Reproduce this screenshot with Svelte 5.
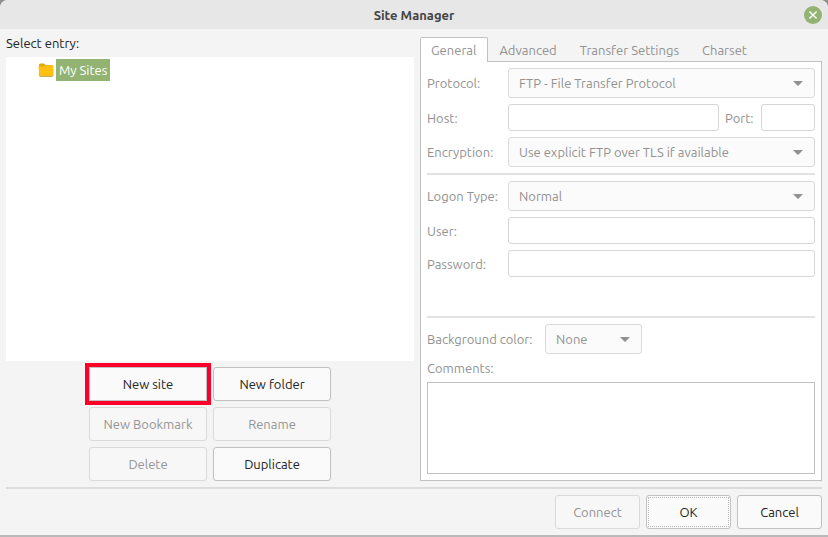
<script>
  const tabs = ["General", "Advanced", "Transfer Settings", "Charset"];
  const actions = [
    { label: "New site", enabled: true, marked: true },
    { label: "New folder", enabled: true },
    { label: "New Bookmark", enabled: false },
    { label: "Rename", enabled: false },
    { label: "Delete", enabled: false },
    { label: "Duplicate", enabled: true }
  ];

  let activeTab = $state("General");
</script>

{#snippet dropdown(id, option)}
  <div class="dropdown">
    <select {id} disabled>
      <option>{option}</option>
    </select>
    <svg width="10" height="5" viewBox="0 0 10 5" aria-hidden="true">
      <path d="M0 0h10L5.6 4.6q-.6.5-1.2 0z" fill="#919191" />
    </svg>
  </div>
{/snippet}

<div class="window">
  <header>
    <h1>Site Manager</h1>
    <button class="close" aria-label="Close">
      <svg width="18" height="18" viewBox="0 0 18 18">
        <circle cx="9" cy="9" r="9" fill="#92b372" />
        <path d="M5.4 5.4l7.2 7.2M12.6 5.4l-7.2 7.2" stroke="#fff" stroke-width="1.4" />
      </svg>
    </button>
  </header>

  <main>
    <section class="sites">
      <h2 id="entries">Select entry:</h2>
      <ul class="tree" aria-labelledby="entries">
        <li>
          <svg width="16" height="14" viewBox="0 0 16 14" aria-hidden="true">
            <path d="M1 2q0-1.500 1.500-1.500h3.500l1.500 1.500h6q1.500 0 1.500 1.500v9H1z" fill="#e8a60c" />
            <path d="M.5 4q0-.5.5-.5h5l1.500-1h7q1 0 1 1v8.500q0 1.500-1.500 1.500h-11q-1.500 0-1.500-1.500z" fill="#ffc011" />
            <path d="M1 12.500q.3.900 1.500.9h11q1.200 0 1.500-.9" fill="none" stroke="#c5a55b" />
          </svg>
          <span>My Sites</span>
        </li>
      </ul>
      <div class="actions">
        {#each actions as action}
          <button class="button" class:marked={action.marked} disabled={!action.enabled}>
            {action.label}
          </button>
        {/each}
      </div>
    </section>

    <section class="settings">
      <div class="tabs" role="tablist">
        {#each tabs as tab}
          <button
            role="tab"
            class="tab"
            class:active={tab === activeTab}
            aria-selected={tab === activeTab}
            onclick={() => (activeTab = tab)}>{tab}</button>
        {/each}
      </div>

      <div class="panel" role="tabpanel">
        <div class="fields">
          <label for="protocol">Protocol:</label>
          {@render dropdown("protocol", "FTP - File Transfer Protocol")}

          <label for="host">Host:</label>
          <div class="host">
            <input id="host" type="text" disabled />
            <label for="port">Port:</label>
            <input id="port" class="port" type="text" disabled />
          </div>

          <label for="encryption">Encryption:</label>
          {@render dropdown("encryption", "Use explicit FTP over TLS if available")}
        </div>
        <hr />
        <div class="fields logon">
          <label for="logon">Logon Type:</label>
          {@render dropdown("logon", "Normal")}

          <label for="user">User:</label>
          <input id="user" type="text" disabled />

          <label for="password">Password:</label>
          <input id="password" type="password" disabled />
        </div>
        <hr />
        <div class="color">
          <label for="color">Background color:</label>
          {@render dropdown("color", "None")}
        </div>
        <label class="comments-label" for="comments">Comments:</label>
        <textarea id="comments" disabled></textarea>
      </div>
    </section>
  </main>

  <footer>
    <button class="button" disabled>Connect</button>
    <button class="button default">OK</button>
    <button class="button">Cancel</button>
  </footer>
</div>

<style>
  :global(body) {
    background: #8f8f8f;
  }
  .window,
  .window * {
    box-sizing: border-box;
  }
  .window {
    min-height: 100vh;
    display: flex;
    flex-direction: column;
    background: #f4f4f4;
    border-bottom: 2px solid #b9b9b9;
    border-radius: 8px 8px 0 0;
    color: #222;
    font: 13px/18px Ubuntu, "Noto Sans", sans-serif;
  }
  button,
  input,
  select,
  textarea {
    margin: 0;
    font: inherit;
    color: inherit;
  }

  header {
    height: 29px;
    display: grid;
    grid-template-columns: 1fr auto 1fr;
    align-items: center;
    padding: 0 6px;
    background: #e7e7e7;
    border-radius: 8px 8px 0 0;
  }
  h1 {
    grid-column: 2;
    margin: 0;
    font-size: 13px;
    line-height: 18px;
    font-weight: 600;
    color: #444;
  }
  .close {
    justify-self: end;
    padding: 0;
    border: 0;
    background: none;
  }
  .close svg {
    display: block;
  }

  main {
    flex: 1;
    display: grid;
    grid-template-columns: 68fr 67fr;
    gap: 6px;
    padding: 6px;
  }
  .sites,
  .settings {
    display: flex;
    flex-direction: column;
    min-width: 0;
  }
  .settings {
    padding-top: 2px;
    color: #929292;
  }
  h2 {
    margin: 0 0 6px;
    font-size: 13px;
    line-height: 16px;
    font-weight: 400;
  }
  .tree {
    flex: 1;
    margin: 0;
    padding: 2px 32px;
    background: #fff;
    list-style: none;
  }
  .tree li {
    display: flex;
    align-items: center;
    gap: 2px;
  }
  .tree span {
    padding: 2px 3px;
    background: #92b372;
    color: #fff;
  }
  .actions {
    display: grid;
    grid-template-columns: 118px 118px;
    justify-content: center;
    gap: 6px;
    padding-top: 6px;
  }

  .button {
    height: 34px;
    padding: 0;
    border: 1px solid #c1c1c1;
    border-radius: 3px;
    background: #fafafa;
  }
  .button:disabled {
    border-color: #dadada;
    background: #f7f7f7;
    color: #959595;
  }
  .button.marked {
    outline: 4px solid #fb0029;
    outline-offset: 0;
    border-radius: 0;
  }

  .tabs {
    display: flex;
    margin-bottom: -1px;
  }
  .tab {
    height: 25px;
    padding: 0 11px 0 10px;
    border: 1px solid transparent;
    border-bottom: 0;
    background: none;
  }
  .tab.active {
    border-color: #c1c1c1;
    border-radius: 2px 2px 0 0;
    background: #fff;
    /* keeps the tab over the panel's top edge */
    z-index: 1;
  }
  .panel {
    flex: 1;
    display: flex;
    flex-direction: column;
    gap: 6px;
    padding: 6px;
    border: 1px solid #c1c1c1;
    background: #fff;
  }
  .fields {
    display: grid;
    grid-template-columns: 75px minmax(0, 1fr);
    align-items: center;
    gap: 6px;
  }
  .logon {
    padding-bottom: 33px;
  }
  .host,
  .color {
    display: flex;
    align-items: center;
    gap: 6px;
  }
  label {
    white-space: nowrap;
  }
  .host label {
    flex: 0 0 30px;
  }
  .color label {
    flex: 0 0 112px;
  }
  input {
    width: 100%;
    min-width: 0;
    height: 27px;
    padding: 0 6px;
    border: 1px solid #d6d6d6;
    border-radius: 3px;
    background: #fff;
  }
  .port {
    flex: 0 0 54px;
  }
  .dropdown {
    display: grid;
    align-items: center;
  }
  .dropdown select,
  .dropdown svg {
    grid-area: 1 / 1;
  }
  .dropdown svg {
    justify-self: end;
    margin-right: 12px;
    pointer-events: none;
  }
  select {
    appearance: none;
    width: 100%;
    height: 30px;
    padding: 0 10px;
    border: 1px solid #dadada;
    border-radius: 3px;
    background: #fbfbfb;
  }
  select:disabled {
    opacity: 1;
    color: #929292;
  }
  .color .dropdown {
    width: 97px;
  }
  hr {
    width: 100%;
    height: 2px;
    margin: 0;
    border: 0;
    background: #e2e2e2;
  }
  .comments-label {
    line-height: 16px;
  }
  textarea {
    flex: 1;
    min-height: 60px;
    border: 1px solid #c1c1c1;
    background: #fff;
    resize: none;
  }

  footer {
    display: flex;
    justify-content: flex-end;
    gap: 6px;
    margin: 0 6px;
    padding: 6px 0;
    border-top: 2px solid #dcdcdc;
  }
  footer .button {
    width: 85px;
  }
  .default {
    outline: 1px dotted #b8b8b8;
    outline-offset: -3px;
  }
</style>
